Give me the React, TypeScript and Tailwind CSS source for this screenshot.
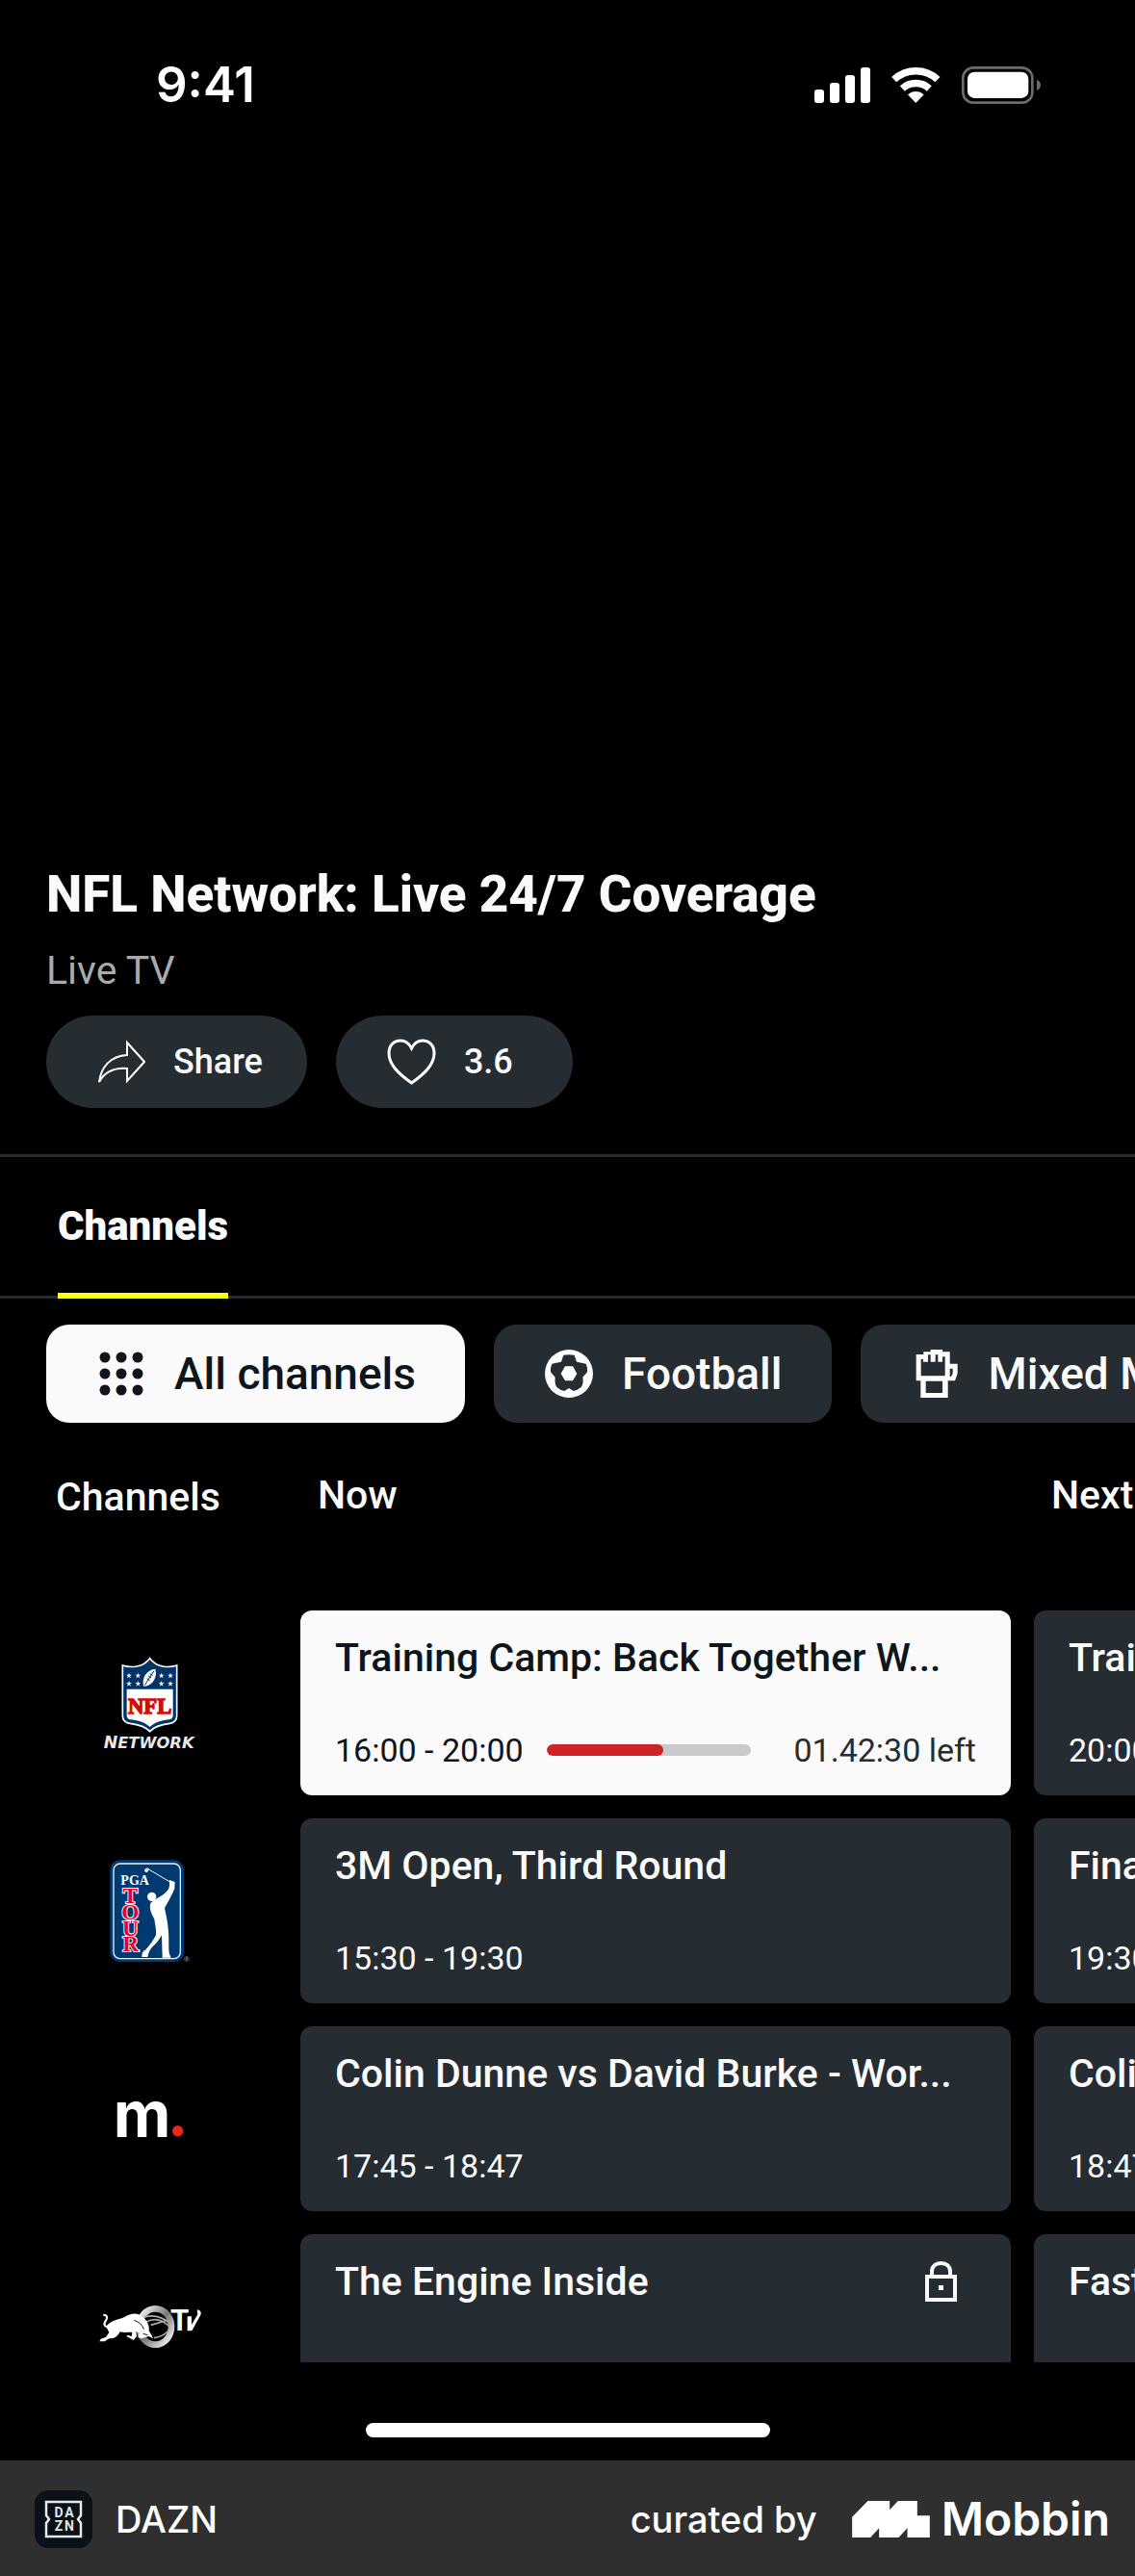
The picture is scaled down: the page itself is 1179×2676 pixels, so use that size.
import type { ReactNode } from "react";

type Programme = {
  title: string;
  time: string;
  left?: string;
  progress?: number;
  locked?: boolean;
};

type Channel = {
  name: string;
  logo: ReactNode;
  now: Programme;
  next: Programme;
};

function SignalIcon() {
  return (
    <svg className="h-[37px] w-[58px]" viewBox="0 0 58 37" fill="#fff" aria-hidden="true">
      <rect x="0" y="23" width="10" height="14" rx="3" />
      <rect x="16" y="16" width="10" height="21" rx="3" />
      <rect x="32" y="8" width="10" height="29" rx="3" />
      <rect x="48" y="0" width="10" height="37" rx="3" />
    </svg>
  );
}

function WifiIcon() {
  return (
    <svg className="h-[37px] w-[51px]" viewBox="258 27 153 111" fill="none" aria-hidden="true">
      <path d="M266 65A100 100 0 0 1 402 65" stroke="#fff" strokeWidth="22" />
      <path d="M292 93A62 62 0 0 1 376 93" stroke="#fff" strokeWidth="22" />
      <path d="M334 138L309 112A36 36 0 0 1 359 112Z" fill="#fff" />
    </svg>
  );
}

function BatteryIcon() {
  return (
    <svg className="h-[39px] w-[82px]" viewBox="477 24 246 117" aria-hidden="true">
      <rect x="481" y="28" width="216" height="109" rx="32" fill="none" stroke="#6b6b6b" strokeWidth="8" />
      <rect x="495" y="41" width="190" height="82" rx="22" fill="#fff" />
      <path d="M711 65Q723 70 723 82Q723 94 711 99Z" fill="#6b6b6b" />
    </svg>
  );
}

function ShareIcon() {
  return (
    <svg className="h-[46px] w-[50px]" viewBox="0 0 50 46" fill="none" stroke="#fff" strokeWidth="2" aria-hidden="true">
      <path d="M31 3L49 23L31 43V30C17 29 8 33 2 44C4 28 14 17 31 16Z" />
    </svg>
  );
}

function HeartIcon() {
  return (
    <svg className="h-[48px] w-[51px]" viewBox="0 0 51 48" fill="none" stroke="#fff" strokeWidth="3" aria-hidden="true">
      <path d="M25.5 46C10 35 2 26 2 15C2 7 7 2 14 2C19 2 23 5 25.5 10C28 5 32 2 37 2C44 2 49 7 49 15C49 26 41 35 25.5 46Z" />
    </svg>
  );
}

function GridIcon() {
  return (
    <svg className="size-[50px]" viewBox="0 0 50 50" fill="#0c161c" aria-hidden="true">
      {[8, 25, 42].map((y) => [8, 25, 42].map((x) => <circle key={`${x}-${y}`} cx={x} cy={y} r="5.5" />))}
    </svg>
  );
}

function FootballIcon() {
  return (
    <svg className="size-[50px]" viewBox="18 36 150 150" aria-hidden="true">
      <circle cx="93" cy="111" r="75" fill="#fff" />
      <path
        d="M76 53Q93 50 110 53L117 74L146 80Q152 93 150 106L136 122Q139 144 131 153Q119 163 107 165L93 156L79 165Q66 163 55 153Q48 144 50 122L36 106Q34 93 40 80L69 74Z"
        fill="#252c32"
      />
      <path d="M81 88H105L118 111L105 133H81L68 111Z" fill="#fff" />
    </svg>
  );
}

function GloveIcon() {
  return (
    <svg className="size-[50px]" viewBox="1162 36 150 150" fill="#fff" fillRule="evenodd" aria-hidden="true">
      <path d="M1176 51H1199V43H1221V36H1258V43H1281V80H1305V110L1297 133H1275V186H1190V133H1176ZM1191 66H1198V74H1213V52H1221V74H1236V52H1244V74H1258V58H1266V118H1191ZM1281 95H1290V110L1285 120H1281ZM1206 134H1258V171H1206Z" />
    </svg>
  );
}

function LockIcon() {
  return (
    <svg className="h-[42px] w-[33px]" viewBox="0 0 33 42" fill="none" stroke="#fafafa" strokeWidth="4" aria-hidden="true">
      <path d="M7 15V11C7 5 11 2 16.500 2C22 2 26 5 26 11V15" />
      <rect x="2" y="16" width="29" height="24" />
      <rect x="14" y="25" width="5" height="5" fill="#fafafa" stroke="none" />
    </svg>
  );
}

const STARS = [
  [223, 243], [251, 243], [223, 268], [251, 268],
  [324, 243], [352, 243], [324, 268], [352, 268],
];

function NflLogo() {
  return (
    <svg className="h-[96px] w-[98px]" viewBox="142 184 294 288" role="img" aria-label="NFL Network">
      <path
        d="M288 189C298 202 312 211 328 214C345 217 358 216 372 211V368C372 382 366 390 350 392C325 395 300 403 288 417C276 403 250 395 226 392C210 390 203 382 203 368V211C218 216 232 217 248 214C264 211 278 202 288 189Z"
        fill="#013369"
        stroke="#fff"
        strokeWidth="5"
      />
      <path
        d="M216 285H360V366C360 376 354 379 346 380C322 383 302 390 288 403C274 390 254 383 230 380C222 379 216 376 216 366Z"
        fill="#fff"
      />
      {STARS.map(([x, y]) => (
        <path
          key={`${x}-${y}`}
          transform={`translate(${x} ${y})`}
          d="M0-9L2-3H9L3 1L6 8L0 4L-6 8L-3 1L-9-3H-2Z"
          fill="#fff"
        />
      ))}
      <path d="M305 222C312 245 300 273 269 277C261 252 276 226 305 222Z" fill="#fff" />
      <path d="M272 273L301 228M283 244L292 250M288 237L297 243M279 252L288 258" stroke="#013369" strokeWidth="3" />
      <text
        x="288"
        y="360"
        textAnchor="middle"
        fontSize="68"
        stroke="#d50a0a"
        strokeWidth="4"
        className="fill-[#d50a0a] font-bold [font-family:'Liberation_Serif',serif]"
      >
        NFL
      </text>
      <text x="144" y="468" fontSize="52" className="fill-[#e8e8e8] font-bold italic [font-family:'DejaVu_Sans',sans-serif]">
        N<tspan fontSize="49">ETWORK</tspan>
      </text>
    </svg>
  );
}

function PgaLogo() {
  return (
    <svg className="h-[107px] w-[84px]" viewBox="164 815 252 321" role="img" aria-label="PGA Tour">
      <rect x="165" y="816" width="230" height="317" rx="30" fill="#003a70" />
      <rect x="176" y="827" width="208" height="296" rx="20" fill="none" stroke="#e6f1fa" strokeWidth="4" />
      <circle cx="295" cy="930" r="14" fill="#fff" />
      <path d="M284 844L352 884" stroke="#fff" strokeWidth="3" />
      <path d="M272 848Q274 838 286 841L283 852Q276 858 272 848Z" fill="#fff" />
      <path
        d="M350 878L367 884L366 905C356 930 344 948 335 965C340 990 345 1010 346 1030C350 1060 346 1090 350 1108L355 1120H328L326 1050C318 1065 308 1078 298 1085C288 1095 285 1105 282 1118H264C264 1105 268 1100 276 1095C290 1080 300 1065 308 1050C310 1035 305 1015 303 1000C296 985 286 970 291 950C300 940 318 932 328 925C342 915 350 905 350 895Z"
        fill="#fff"
      />
      <text x="198" y="893" fontSize="42" className="fill-white font-bold [font-family:'Liberation_Serif',serif]">
        PGA
      </text>
      <text
        fontSize="70"
        textAnchor="middle"
        fill="#e4002b"
        stroke="#fff"
        strokeWidth="6"
        paintOrder="stroke"
        className="font-bold [font-family:'Liberation_Serif',serif]"
      >
        <tspan x="228" y="950">T</tspan>
        <tspan x="228" y="1000">O</tspan>
        <tspan x="228" y="1051">U</tspan>
        <tspan x="229" y="1101">R</tspan>
      </text>
      <text x="395" y="1134" fontSize="24" className="fill-[#8a8a8a] [font-family:'Liberation_Sans',sans-serif]">
        ®
      </text>
    </svg>
  );
}

function MLogo() {
  return (
    <svg className="h-[38px] w-[70px]" viewBox="185 248 210 114" role="img" aria-label="m.">
      <text x="175" y="361" fontSize="196" className="fill-white font-bold [font-family:Inter,sans-serif]">
        m
      </text>
      <circle cx="376" cy="343" r="17" fill="#e8281e" />
    </svg>
  );
}

function RedBullLogo() {
  return (
    <svg className="h-[46px] w-[107px]" viewBox="129 881 321 138" fill="none" role="img" aria-label="Red Bull TV">
      <defs>
        <linearGradient id="ring" x1="0" y1="0" x2="1" y2="1">
          <stop offset="0" stopColor="#fff" />
          <stop offset="0.5" stopColor="#777" />
          <stop offset="1" stopColor="#fff" />
        </linearGradient>
      </defs>
      <ellipse cx="304" cy="950" rx="50" ry="56" stroke="url(#ring)" strokeWidth="20" />
      <path d="M262 922Q310 905 350 940M275 935Q315 915 348 950M290 945L335 932M300 985Q335 980 350 955" stroke="#aaa" strokeWidth="5" />
      <path
        d="M150 950C165 930 190 928 208 920C225 908 250 905 262 918C280 930 286 950 284 962L298 987L284 980L262 986L250 984L254 968L244 966L246 980L236 992L214 980L218 976L230 980L232 968C220 966 208 970 194 966C188 978 176 990 162 986L146 996H130L134 988L150 982L160 968L154 956Z"
        fill="#fff"
      />
      <path d="M166 948C152 956 140 946 148 934C154 926 158 914 142 913" stroke="#fff" strokeWidth="6" />
      <path d="M266 972L280 976M238 930Q262 938 268 958" stroke="#111" strokeWidth="3" />
      <text x="352" y="963" fontSize="92" className="fill-white font-bold [font-family:'Liberation_Sans',sans-serif]">
        T
      </text>
      <path d="M404 918V963H418L446 912Q448 898 434 897L436 912L417 944V918Z" fill="#fff" />
    </svg>
  );
}

function MobbinMark() {
  return (
    <svg className="h-[38px] w-[81px]" viewBox="48 78 242 114" fill="#fff" aria-hidden="true">
      <path d="M48 128L97 78H165V106L191 78H251V124H290V192H220V163L193 192H132V163L105 192H48Z" />
    </svg>
  );
}

function DaznIcon() {
  return (
    <svg className="size-[60px]" viewBox="0 0 60 60" aria-hidden="true">
      <rect width="60" height="60" rx="14" fill="#0a1217" />
      <path d="M12 12H48V26L45 30L48 34V48H12V34L15 30L12 26Z" fill="none" stroke="#e3e8ea" strokeWidth="2.500" />
      <g fontSize="14" textAnchor="middle" className="fill-[#dfe5e8] font-bold [font-family:Roboto,sans-serif]">
        <text x="25" y="28">D</text>
        <text x="36" y="28">A</text>
        <text x="25" y="42">Z</text>
        <text x="36" y="42">N</text>
      </g>
    </svg>
  );
}

const CHANNELS: Channel[] = [
  {
    name: "nfl",
    logo: <NflLogo />,
    now: {
      title: "Training Camp: Back Together W...",
      time: "16:00 - 20:00",
      left: "01.42:30 left",
      progress: 57,
    },
    next: { title: "Training Camp", time: "20:00 - 21:00" },
  },
  {
    name: "pga",
    logo: <PgaLogo />,
    now: { title: "3M Open, Third Round", time: "15:30 - 19:30" },
    next: { title: "Final Round", time: "19:30 - 23:30" },
  },
  {
    name: "m",
    logo: <MLogo />,
    now: { title: "Colin Dunne vs David Burke - Wor...", time: "17:45 - 18:47" },
    next: { title: "Colin Dunne", time: "18:47 - 19:50" },
  },
  {
    name: "redbull",
    logo: <RedBullLogo />,
    now: { title: "The Engine Inside", time: "17:57 - 19:01", locked: true },
    next: { title: "Fast Life", time: "19:01 - 19:30" },
  },
];

const CHIPS = [
  { label: "All channels", icon: <GridIcon />, selected: true },
  { label: "Football", icon: <FootballIcon />, selected: false },
  { label: "Mixed Martial Arts", icon: <GloveIcon />, selected: false },
];

function ProgrammeCard({ programme }: { programme: Programme }) {
  const live = programme.progress !== undefined;

  return (
    <div
      className={`flex h-48 w-[738px] flex-col justify-between rounded-xl px-9 pt-[25px] pb-[26px] ${
        live ? "bg-[#fafafa] text-[#0c161c]" : "bg-[#252c32] text-[#fafafa]"
      }`}
    >
      <div className="flex items-center justify-between pr-5">
        <h3 className="text-[41px] leading-[48px] font-medium whitespace-nowrap">{programme.title}</h3>
        {programme.locked && <LockIcon />}
      </div>
      <div className="flex items-center text-[34px] leading-[42px] whitespace-nowrap">
        <span>{programme.time}</span>
        {live && (
          <>
            <div className="mr-11 ml-6 h-3 flex-1 overflow-hidden rounded-full bg-[#c8cacb]">
              <div className="h-full rounded-full bg-[#cf2427]" style={{ width: `${programme.progress}%` }} />
            </div>
            <span className="text-[#252c32]">{programme.left}</span>
          </>
        )}
      </div>
    </div>
  );
}

export default function App() {
  return (
    <div className="w-full overflow-hidden bg-black text-[#fafafa] [font-family:Roboto,sans-serif]">
      <header className="flex h-44 items-center justify-between pr-[98px] pl-[162px]">
        <span className="text-[51px] leading-[60px] font-semibold text-white [font-family:Inter,sans-serif]">9:41</span>
        <div className="flex items-center gap-[22px]">
          <SignalIcon />
          <WifiIcon />
          <BatteryIcon />
        </div>
      </header>

      <main>
        <div className="h-[721px] bg-black" />

        <section className="px-12 pb-12">
          <h1 className="text-[53px] leading-[64px] font-extrabold">NFL Network: Live 24/7 Coverage</h1>
          <p className="mt-[23px] text-[41px] leading-[48px] text-[#a8abad]">Live TV</p>
          <div className="mt-[23px] flex gap-[30px] text-[36px] leading-[42px] font-medium">
            <button type="button" className="flex h-24 items-center gap-[29px] rounded-full bg-[#252c32] pr-[46px] pl-[53px]">
              <ShareIcon />
              Share
            </button>
            <button type="button" className="flex h-24 items-center gap-[29px] rounded-full bg-[#252c32] pr-[62px] pl-[53px]">
              <HeartIcon />
              3.6
            </button>
          </div>
        </section>

        <nav className="flex border-y-[3px] border-[#252c32] px-[60px]">
          <a
            href="#channels"
            className="-mb-[3px] flex h-[147px] items-center border-b-6 border-[#f7ff1a] pt-0.5 text-[42px] leading-[48px] font-black"
          >
            Channels
          </a>
        </nav>

        <div className="flex gap-[30px] overflow-hidden pt-[27px] pl-12">
          {CHIPS.map((chip) => (
            <button
              key={chip.label}
              type="button"
              className={`flex h-[102px] shrink-0 items-center gap-[30px] rounded-3xl pr-[51px] pl-[53px] text-[46px] leading-[56px] font-medium whitespace-nowrap ${
                chip.selected ? "bg-[#fafafa] text-[#0c161c]" : "bg-[#252c32] text-[#fafafa]"
              }`}
            >
              {chip.icon}
              {chip.label}
            </button>
          ))}
        </div>

        <table id="channels" className="mt-[51px] block h-[925px] overflow-hidden">
          <thead className="block">
            <tr className="flex h-36 items-start text-left text-[41px] leading-[48px]">
              <th scope="col" className="w-[312px] shrink-0 pt-0.5 pl-[58px] font-medium">
                Channels
              </th>
              <th scope="col" className="w-[762px] shrink-0 pl-[18px] font-medium">
                Now
              </th>
              <th scope="col" className="w-[738px] shrink-0 pl-[18px] font-medium">
                Next
              </th>
            </tr>
          </thead>
          <tbody className="flex flex-col gap-6">
            {CHANNELS.map((channel) => (
              <tr key={channel.name} className="flex">
                <th scope="row" className="flex w-[312px] shrink-0 items-center justify-center">
                  {channel.logo}
                </th>
                <td className="w-[762px] shrink-0">
                  <ProgrammeCard programme={channel.now} />
                </td>
                <td className="w-[738px] shrink-0">
                  <ProgrammeCard programme={channel.next} />
                </td>
              </tr>
            ))}
          </tbody>
        </table>

        <div className="flex h-[102px] justify-center pt-[63px]">
          <div className="h-[15px] w-[420px] rounded-full bg-white" />
        </div>
      </main>

      <footer className="flex h-[120px] items-center justify-between bg-[#2f2f2f] pt-0.5 pr-[26px] pl-9 text-[38px] leading-[48px] font-medium text-white [font-family:Inter,sans-serif]">
        <div className="flex items-center gap-6">
          <DaznIcon />
          <span>DAZN</span>
        </div>
        <div className="flex items-center">
          <span>curated by</span>
          <a href="#mobbin" className="ml-9 flex items-center gap-3 text-[48px] leading-[60px] font-semibold">
            <MobbinMark />
            Mobbin
          </a>
        </div>
      </footer>
    </div>
  );
}
